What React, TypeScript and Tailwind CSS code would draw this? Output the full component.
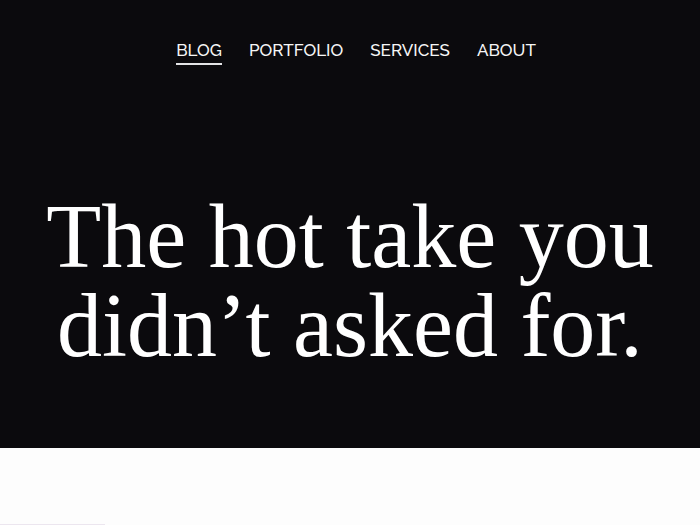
const links = ["BLOG", "PORTFOLIO", "SERVICES", "ABOUT"];

export default function App() {
  return (
    <div className="min-h-[525px] bg-[#fdfdfd]">
      <header className="flex h-[448px] flex-col items-center bg-[#0b0a0d] text-white">
        <nav className="ml-[12px] mt-[40px] flex gap-[27px] font-['Raleway','Lato',sans-serif] text-[17px] font-medium leading-[20px] text-[#f6f6f6]">
          {links.map((l, i) => (
            <a
              key={l}
              href="#"
              className={
                i === 0
                  ? "border-b-2 border-[#e4e4e6] pb-[3px]"
                  : "pb-[3px]"
              }
            >
              {l}
            </a>
          ))}
        </nav>
        <h1 className="mt-[127px] text-center font-['Liberation_Serif',serif] text-[90px] leading-[89px] text-white">
          The hot take you
          <br />
          didn’t asked for.
        </h1>
      </header>
      <div className="flex h-[77px] flex-col justify-end">
        {/* reading progress */}
        <div className="h-px w-[105px] bg-[#ece6ef]" />
      </div>
    </div>
  );
}
